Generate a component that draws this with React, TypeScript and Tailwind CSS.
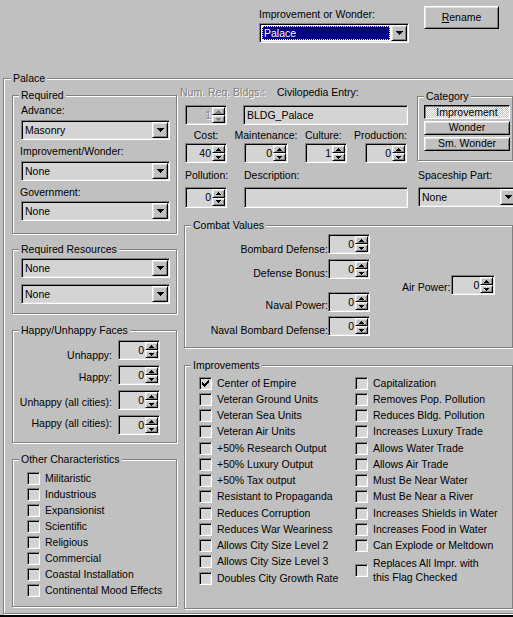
import React from "react";

// classic 3D edge styles
const sunken =
  "border border-t-[#808080] border-l-[#808080] border-r-white border-b-white shadow-[inset_1px_1px_0_#000,inset_-1px_-1px_0_#dfdfdf]";
const raised =
  "border border-t-white border-l-white border-r-black border-b-black shadow-[inset_1px_1px_0_#dfdfdf,inset_-1px_-1px_0_#808080] bg-[#c0c0c0]";
const pushed =
  "border border-t-black border-l-black border-r-white border-b-white shadow-[inset_1px_1px_0_#808080,inset_-1px_-1px_0_#dfdfdf]";
const fieldBg = "bg-[#d4d4d4]";
const disabledText = "text-[#808080] [text-shadow:1px_1px_0_#fff]";

function Group({
  label,
  className = "",
  labelLeft = "left-[6px]",
  children,
}: {
  label: string;
  className?: string;
  labelLeft?: string;
  children?: React.ReactNode;
}) {
  return (
    <div
      className={`relative shrink-0 border border-[#808080] shadow-[inset_1px_1px_0_#fff,1px_1px_0_#fff] ${className}`}
    >
      <span className={`absolute ${labelLeft} top-[-7px] bg-[#c0c0c0] px-[2px] leading-[13px] whitespace-nowrap`}>
        {label}
      </span>
      {children}
    </div>
  );
}

function DownArrow() {
  return (
    <svg width="7" height="4" viewBox="0 0 7 4" shapeRendering="crispEdges" fill="#000">
      <rect x="0" y="0" width="7" height="1" />
      <rect x="1" y="1" width="5" height="1" />
      <rect x="2" y="2" width="3" height="1" />
      <rect x="3" y="3" width="1" height="1" />
    </svg>
  );
}

function SpinArrow({ up = false, color = "#000" }: { up?: boolean; color?: string }) {
  return (
    <svg width="5" height="3" viewBox="0 0 5 3" shapeRendering="crispEdges" fill={color}>
      {up ? (
        <>
          <rect x="2" y="0" width="1" height="1" />
          <rect x="1" y="1" width="3" height="1" />
          <rect x="0" y="2" width="5" height="1" />
        </>
      ) : (
        <>
          <rect x="0" y="0" width="5" height="1" />
          <rect x="1" y="1" width="3" height="1" />
          <rect x="2" y="2" width="1" height="1" />
        </>
      )}
    </svg>
  );
}

function CheckMark() {
  return (
    <svg width="7" height="7" viewBox="0 0 7 7" shapeRendering="crispEdges" fill="#000">
      <rect x="6" y="0" width="1" height="1" />
      <rect x="5" y="1" width="2" height="1" />
      <rect x="0" y="2" width="1" height="1" />
      <rect x="4" y="2" width="3" height="1" />
      <rect x="0" y="3" width="2" height="1" />
      <rect x="3" y="3" width="3" height="1" />
      <rect x="0" y="4" width="5" height="1" />
      <rect x="1" y="5" width="3" height="1" />
      <rect x="2" y="6" width="1" height="1" />
    </svg>
  );
}

function Combo({ value, className = "" }: { value: string; className?: string }) {
  return (
    <div className={`${sunken} ${fieldBg} h-[20px] p-[1px] flex shrink-0 ${className}`}>
      <span className="flex-1 pl-[2px] pt-[1px] leading-[15px] whitespace-nowrap overflow-hidden">{value}</span>
      <div className={`${raised} w-[16px] flex items-center justify-center`}>
        <DownArrow />
      </div>
    </div>
  );
}

function Spin({
  value,
  className = "",
  disabled = false,
}: {
  value: string;
  className?: string;
  disabled?: boolean;
}) {
  const arrow = disabled ? "#808080" : "#000";
  return (
    <div
      className={`${sunken} ${disabled ? "bg-[#c0c0c0]" : fieldBg} h-[20px] p-[1px] flex shrink-0 ${className}`}
    >
      <span className={`flex-1 text-right pr-[1px] leading-[16px] ${disabled ? disabledText : ""}`}>{value}</span>
      <div className="flex flex-col w-[13px]">
        <div className={`${raised} flex-1 flex items-center justify-center`}>
          <SpinArrow up color={arrow} />
        </div>
        <div className={`${raised} flex-1 flex items-center justify-center`}>
          <SpinArrow color={arrow} />
        </div>
      </div>
    </div>
  );
}

function Check({ label, checked = false, className = "" }: { label: React.ReactNode; checked?: boolean; className?: string }) {
  return (
    <div className={`flex items-center gap-[5px] ${className}`}>
      <div className={`${sunken} ${fieldBg} w-[13px] h-[13px] shrink-0 flex items-center justify-center`}>
        {checked && <CheckMark />}
      </div>
      <span className="leading-[13px] whitespace-nowrap">{label}</span>
    </div>
  );
}

const faces = [
  { label: "Unhappy:", off: "mt-[9px]" },
  { label: "Happy:", off: "mt-[6px]" },
  { label: "Unhappy (all cities):", off: "mt-[6px]" },
  { label: "Happy (all cities):", off: "mt-[2px]" },
];

const traits = [
  "Militaristic",
  "Industrious",
  "Expansionist",
  "Scientific",
  "Religious",
  "Commercial",
  "Coastal Installation",
  "Continental Mood Effects",
];

const combat = [
  { label: "Bombard Defense:", gap: "", off: "mt-[9px]" },
  { label: "Defense Bonus:", gap: "mt-[5px]", off: "mt-[8px]" },
  { label: "Naval Power:", gap: "mt-[13px]", off: "mt-[7px]" },
  { label: "Naval Bombard Defense:", gap: "mt-[4px]", off: "mt-[8px]" },
];

const flagsLeft = [
  "Center of Empire",
  "Veteran Ground Units",
  "Veteran Sea Units",
  "Veteran Air Units",
  "+50% Research Output",
  "+50% Luxury Output",
  "+50% Tax output",
  "Resistant to Propaganda",
  "Reduces Corruption",
  "Reduces War Weariness",
  "Allows City Size Level 2",
  "Allows City Size Level 3",
  "Doubles City Growth Rate",
];

const flagsRight = [
  "Capitalization",
  "Removes Pop. Pollution",
  "Reduces Bldg. Pollution",
  "Increases Luxury Trade",
  "Allows Water Trade",
  "Allows Air Trade",
  "Must Be Near Water",
  "Must Be Near a River",
  "Increases Shields in Water",
  "Increases Food in Water",
  "Can Explode or Meltdown",
];

export default function App() {
  return (
    <div className="w-[513px] h-[617px] overflow-hidden bg-[#c0c0c0] text-black text-[10.5px] leading-[13px] [font-family:'Liberation_Sans',Arial,sans-serif] flex flex-col select-none">
      {/* record picker + rename */}
      <div className="h-[78px] shrink-0 flex justify-end gap-[15px] pr-[14px] pt-[6px]">
        <div className="flex flex-col mt-[2px]">
          <span>Improvement or Wonder:</span>
          <div className={`${sunken} bg-white mt-[2px] w-[150px] h-[20px] p-[1px] flex`}>
            <div className="flex-1 m-[1px] bg-[#000080] border border-dotted border-[#ffff80] text-white leading-[12px] pl-[1px]">
              Palace
            </div>
            <div className={`${raised} w-[16px] flex items-center justify-center`}>
              <DownArrow />
            </div>
          </div>
        </div>
        <div className={`${raised} w-[75px] h-[23px] flex items-center justify-center`}>
          <span>
            <span className="underline underline-offset-[1px]">R</span>ename
          </span>
        </div>
      </div>

      <Group label="Palace" labelLeft="left-[7px]" className="ml-[3px] w-[530px] h-[536px] flex items-start">
        {/* left column */}
        <div className="ml-[8px] mt-[16px] w-[165px] flex flex-col shrink-0">
          <Group label="Required" className="h-[139px]">
            <div className="flex flex-col pt-[8px] pl-[7px]">
              <span className="ml-[1px]">Advance:</span>
              <Combo value="Masonry" className="mt-[3px] ml-[1px] w-[149px]" />
              <span className="mt-[5px]">Improvement/Wonder:</span>
              <Combo value="None" className="mt-[3px] ml-[1px] w-[149px]" />
              <span className="mt-[5px]">Government:</span>
              <Combo value="None" className="mt-[2px] ml-[1px] w-[149px]" />
            </div>
          </Group>

          <Group label="Required Resources" className="mt-[15px] h-[65px]">
            <div className="flex flex-col pt-[8px] pl-[8px]">
              <Combo value="None" className="w-[149px]" />
              <Combo value="None" className="mt-[6px] w-[149px]" />
            </div>
          </Group>

          <Group label="Happy/Unhappy Faces" className="mt-[16px] h-[113px]">
            <div className="flex flex-col gap-[5px] pt-[9px]">
              {faces.map((f) => (
                <div key={f.label} className="flex items-start h-[20px]">
                  <span className={`w-[99px] text-right whitespace-nowrap ${f.off}`}>{f.label}</span>
                  <Spin value="0" className="ml-[6px] w-[42px]" />
                </div>
              ))}
            </div>
          </Group>

          <Group label="Other Characteristics" className="mt-[16px] h-[148px]">
            <div className="flex flex-col pt-[10px] pl-[14px]">
              {traits.map((t) => (
                <Check key={t} label={t} className="h-[16px]" />
              ))}
            </div>
          </Group>
        </div>

        {/* right column */}
        <div className="ml-[7px] w-[329px] flex flex-col shrink-0">
          <div className="h-[146px] flex shrink-0">
            <div className="w-[233px] flex flex-col shrink-0">
              <div className="mt-[7px] flex">
                <span className={`-ml-[4px] w-[97px] whitespace-nowrap ${disabledText}`}>Num. Req. Bldgs.:</span>
                <span className="whitespace-nowrap">Civilopedia Entry:</span>
              </div>
              <div className="mt-[6px] flex">
                <Spin value="1" disabled className="ml-[1px] w-[42px]" />
                <div className={`${sunken} ${fieldBg} ml-[16px] w-[165px] h-[20px] p-[1px] pl-[3px] leading-[16px]`}>
                  BLDG_Palace
                </div>
              </div>
              <div className="mt-[4px] flex gap-[7px]">
                <div className="ml-[1px] w-[42px] flex flex-col items-center">
                  <span>Cost:</span>
                  <Spin value="40" className="mt-[1px] w-[42px]" />
                </div>
                <div className="w-[64px] flex flex-col items-center">
                  <span className="whitespace-nowrap">Maintenance:</span>
                  <Spin value="0" className="mt-[1px] w-[44px]" />
                </div>
                <div className="w-[42px] flex flex-col items-start">
                  <span>Culture:</span>
                  <Spin value="1" className="mt-[1px] w-[42px]" />
                </div>
                <div className="w-[53px] flex flex-col items-end">
                  <span>Production:</span>
                  <Spin value="0" className="mt-[1px] w-[42px]" />
                </div>
              </div>
              <div className="mt-[6px] flex">
                <span className="ml-[1px] w-[59px]">Pollution:</span>
                <span>Description:</span>
              </div>
              <div className="mt-[5px] flex">
                <Spin value="0" className="ml-[1px] w-[42px] !h-[21px]" />
                <div className={`${sunken} ${fieldBg} ml-[17px] w-[164px] h-[21px]`} />
              </div>
            </div>

            <div className="flex flex-col shrink-0">
              <Group label="Category" className="mt-[17px] w-[96px] h-[65px]">
                <div className="flex flex-col gap-[2px] pt-[8px] pl-[6px]">
                  <div
                    className={`${pushed} w-[86px] h-[14px] flex items-center justify-center pb-[1px] leading-[12px] bg-[image:repeating-conic-gradient(#fff_0_25%,#c0c0c0_0_50%)] bg-[length:2px_2px]`}
                  >
                    Improvement
                  </div>
                  <div className={`${raised} w-[86px] h-[14px] flex items-center justify-center pb-[2px] leading-[12px]`}>
                    Wonder
                  </div>
                  <div className={`${raised} w-[86px] h-[14px] flex items-center justify-center pb-[2px] leading-[12px]`}>
                    Sm. Wonder
                  </div>
                </div>
              </Group>
              <span className="mt-[8px] ml-[1px] whitespace-nowrap">Spaceship Part:</span>
              <Combo value="None" className="mt-[5px] ml-[1px] w-[100px]" />
            </div>
          </div>

          <Group label="Combat Values" className="h-[123px] flex items-start pt-[8px]">
            <div className="w-[185px] flex flex-col shrink-0">
              {combat.map((c) => (
                <div key={c.label} className={`h-[20px] flex justify-end items-start ${c.gap}`}>
                  <span className={`whitespace-nowrap text-right ${c.off}`}>{c.label}</span>
                  <Spin value="0" className="w-[42px]" />
                </div>
              ))}
            </div>
            <div className="ml-[32px] mt-[41px] h-[20px] flex items-start">
              <span className="mt-[6px] whitespace-nowrap">Air Power:</span>
              <Spin value="0" className="ml-[1px] w-[44px]" />
            </div>
          </Group>

          <Group label="Improvements" className="mt-[17px] h-[244px]">
            <div className="grid grid-cols-[156px_1fr] pl-[14px] pt-[9px]">
              <div className="flex flex-col">
                {flagsLeft.map((f, i) => (
                  <Check key={f} label={f} checked={i === 0} className="h-[16.25px]" />
                ))}
              </div>
              <div className="flex flex-col">
                {flagsRight.map((f) => (
                  <Check key={f} label={f} className="h-[16.25px]" />
                ))}
                <div className="h-[32.5px] flex items-center gap-[5px]">
                  <div className={`${sunken} ${fieldBg} w-[13px] h-[13px] shrink-0`} />
                  <span className="leading-[14px]">
                    Replaces All Impr. with
                    <br />
                    this Flag Checked
                  </span>
                </div>
              </div>
            </div>
          </Group>
        </div>
      </Group>

      <div className="mt-[1px] h-[2px] bg-black shrink-0" />
    </div>
  );
}
